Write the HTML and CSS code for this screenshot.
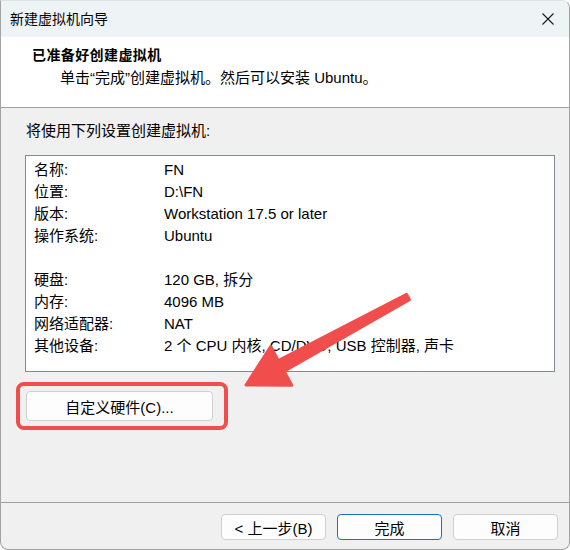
FILE: index.html
```html
<!DOCTYPE html>
<html>
<head>
    <title>新建虚拟机向导</title>
    <link rel="stylesheet" href="styles.css">
</head>
<body>
    <div class="window">
        <div class="titlebar">
            <span class="title">新建虚拟机向导</span>
            <svg class="close" width="14" height="14" viewBox="0 0 14 14">
                <path d="M1.5 1.5 L12.5 12.5 M12.5 1.5 L1.5 12.5" stroke="#1b1b1b" stroke-width="1.1" fill="none"/>
            </svg>
        </div>

        <div class="header">
            <h1>已准备好创建虚拟机</h1>
            <p>单击“完成”创建虚拟机。然后可以安装 Ubuntu。</p>
        </div>

        <div class="content">
            <p class="intro">将使用下列设置创建虚拟机:</p>

            <div class="summary">
                <div class="row"><span class="key">名称:</span><span>FN</span></div>
                <div class="row"><span class="key">位置:</span><span>D:\FN</span></div>
                <div class="row"><span class="key">版本:</span><span>Workstation 17.5 or later</span></div>
                <div class="row"><span class="key">操作系统:</span><span>Ubuntu</span></div>
                <div class="row"></div>
                <div class="row"><span class="key">硬盘:</span><span>120 GB, 拆分</span></div>
                <div class="row"><span class="key">内存:</span><span>4096 MB</span></div>
                <div class="row"><span class="key">网络适配器:</span><span>NAT</span></div>
                <div class="row"><span class="key">其他设备:</span><span>2 个 CPU 内核, CD/DVD, USB 控制器, 声卡</span></div>
            </div>

            <div class="highlight">
                <button class="btn custom">自定义硬件(C)...</button>
            </div>
        </div>

        <div class="footer">
            <button class="btn">&lt; 上一步(B)</button>
            <button class="btn primary">完成</button>
            <button class="btn">取消</button>
        </div>

        <!-- annotation arrow drawn over the dialog -->
        <svg class="arrow" width="570" height="550" viewBox="0 0 570 550">
            <polygon points="246,385 270.7,346.5 278.3,360.6 406.6,294.4 409.4,299.6 284.1,371.2 291.7,385.3"
                     fill="#f24d4d" stroke="#f24d4d" stroke-width="3" stroke-linejoin="round"/>
        </svg>
    </div>
</body>
</html>
```

FILE: styles.css
```css
html, body {
    margin: 0;
    padding: 0;
    background: #ffffff;
}

body {
    font-family: "Liberation Sans", "Noto Sans CJK SC", sans-serif;
    font-size: 15px;
    color: #000;
}

.window {
    position: relative;
    width: 570px;
    height: 550px;
    box-sizing: border-box;
    display: flex;
    flex-direction: column;
    background: #f0f0f0;
    border: 1px solid #a3a3a3;
    border-top-color: #dfe3e6;
    border-radius: 0 8px 8px 8px;
    overflow: hidden;
}

.titlebar {
    height: 36px;
    display: flex;
    align-items: center;
    justify-content: space-between;
    padding: 0 14px 0 9px;
    background: #eef3f5;
}

.title {
    font-size: 14px;
    line-height: 20px;
}

.close {
    display: block;
}

.header {
    height: 71px;
    box-sizing: border-box;
    background: #ffffff;
    border-bottom: 1px solid #a0a0a0;
    padding: 8px 0 0 31px;
}

.header h1 {
    margin: 0;
    font-size: 14px;
    line-height: 20px;
    font-weight: bold;
    letter-spacing: 0.4px;
}

.header p {
    margin: 3px 0 0 28px;
    line-height: 20px;
}

.content {
    flex: 1;
    padding: 13px 0 0 14px;
}

.intro {
    margin: 0 0 14px 11px;
    line-height: 20px;
}

.summary {
    width: 530px;
    box-sizing: border-box;
    margin-left: 10px;
    padding: 3px 0 14px 8px;
    background: #ffffff;
    border: 1px solid #858990;
}

.row {
    display: flex;
    height: 22px;
    line-height: 22px;
    white-space: nowrap;
}

.key {
    width: 130px;
}

.highlight {
    display: inline-block;
    margin: 10px 0 0 1px;
    padding: 5px 11px 5px 6px;
    border: 4px solid #f24d4d;
    border-radius: 8px;
}

.btn {
    font-family: inherit;
    font-size: 15px;
    color: #000;
    background: #fdfdfd;
    border: 1px solid #d0d0d0;
    border-radius: 4px;
    width: 105px;
    height: 26px;
    padding: 0;
    cursor: pointer;
}

.btn.custom {
    display: block;
    width: 187px;
    height: 30px;
}

.btn.primary {
    border-color: #1b6fc4;
}

.footer {
    height: 47px;
    box-sizing: border-box;
    border-top: 1px solid #a0a0a0;
    display: flex;
    justify-content: flex-end;
    gap: 11px;
    padding: 11px 11px 0 0;
}

.arrow {
    position: absolute;
    left: -1px;
    top: -1px;
    pointer-events: none;
}
```
